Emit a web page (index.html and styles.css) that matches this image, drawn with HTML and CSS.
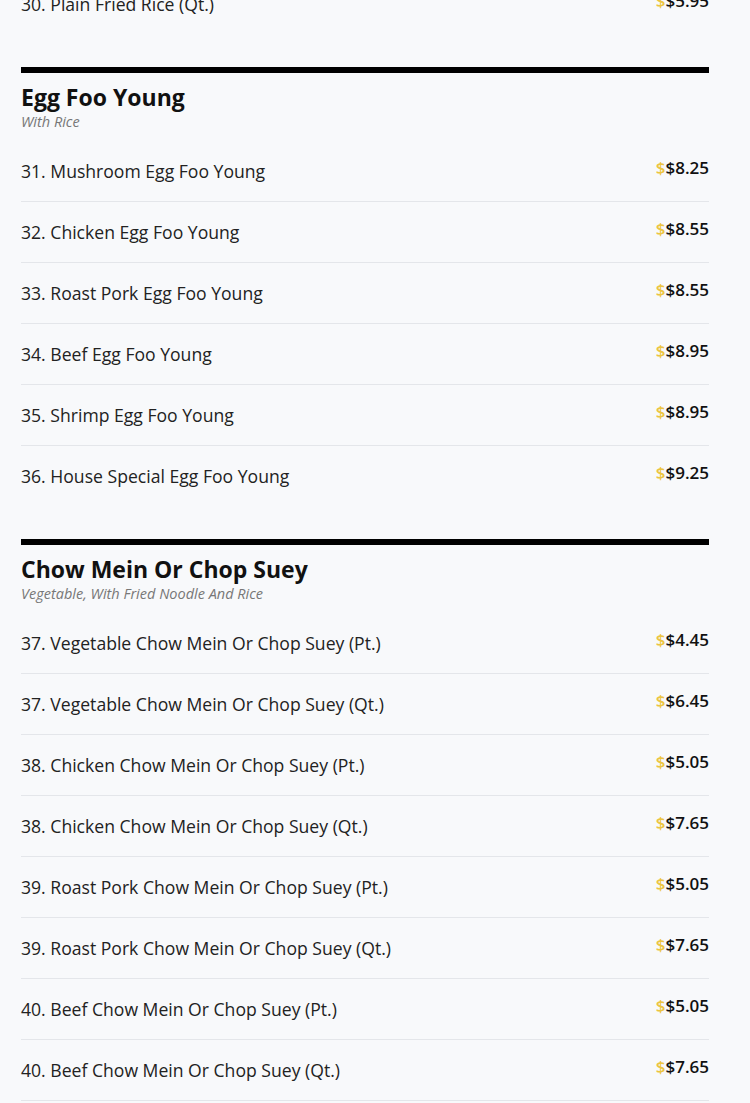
FILE: index.html
```html
<!DOCTYPE html>
<html lang="en">
<head>
<meta charset="utf-8">
<title>Menu</title>
<link rel="stylesheet" href="styles.css">
</head>
<body>
<main class="menu">
  <ul class="items items--cut">
    <li class="item"><span class="item-name">30. Plain Fried Rice (Qt.)</span><span class="price"><span class="cur">$</span>$5.95</span></li>
  </ul>

  <section class="section">
    <h2 class="section-title">Egg Foo Young</h2>
    <p class="section-note">With Rice</p>
    <ul class="items">
      <li class="item"><span class="item-name">31. Mushroom Egg Foo Young</span><span class="price"><span class="cur">$</span>$8.25</span></li>
      <li class="item"><span class="item-name">32. Chicken Egg Foo Young</span><span class="price"><span class="cur">$</span>$8.55</span></li>
      <li class="item"><span class="item-name">33. Roast Pork Egg Foo Young</span><span class="price"><span class="cur">$</span>$8.55</span></li>
      <li class="item"><span class="item-name">34. Beef Egg Foo Young</span><span class="price"><span class="cur">$</span>$8.95</span></li>
      <li class="item"><span class="item-name">35. Shrimp Egg Foo Young</span><span class="price"><span class="cur">$</span>$8.95</span></li>
      <li class="item"><span class="item-name">36. House Special Egg Foo Young</span><span class="price"><span class="cur">$</span>$9.25</span></li>
    </ul>
  </section>

  <section class="section">
    <h2 class="section-title">Chow Mein Or Chop Suey</h2>
    <p class="section-note">Vegetable, With Fried Noodle And Rice</p>
    <ul class="items">
      <li class="item"><span class="item-name">37. Vegetable Chow Mein Or Chop Suey (Pt.)</span><span class="price"><span class="cur">$</span>$4.45</span></li>
      <li class="item"><span class="item-name">37. Vegetable Chow Mein Or Chop Suey (Qt.)</span><span class="price"><span class="cur">$</span>$6.45</span></li>
      <li class="item"><span class="item-name">38. Chicken Chow Mein Or Chop Suey (Pt.)</span><span class="price"><span class="cur">$</span>$5.05</span></li>
      <li class="item"><span class="item-name">38. Chicken Chow Mein Or Chop Suey (Qt.)</span><span class="price"><span class="cur">$</span>$7.65</span></li>
      <li class="item"><span class="item-name">39. Roast Pork Chow Mein Or Chop Suey (Pt.)</span><span class="price"><span class="cur">$</span>$5.05</span></li>
      <li class="item"><span class="item-name">39. Roast Pork Chow Mein Or Chop Suey (Qt.)</span><span class="price"><span class="cur">$</span>$7.65</span></li>
      <li class="item"><span class="item-name">40. Beef Chow Mein Or Chop Suey (Pt.)</span><span class="price"><span class="cur">$</span>$5.05</span></li>
      <li class="item"><span class="item-name">40. Beef Chow Mein Or Chop Suey (Qt.)</span><span class="price"><span class="cur">$</span>$7.65</span></li>
      <li class="item"><span class="item-name">41. Shrimp Chow Mein Or Chop Suey (Pt.)</span><span class="price"><span class="cur">$</span>$5.55</span></li>
    </ul>
  </section>
</main>
</body>
</html>
```
FILE: styles.css
```css
* { box-sizing: border-box; }

html, body {
  margin: 0;
  padding: 0;
  background: #f8f9fb;
  overflow: hidden;
}

body {
  font-family: "Open Sans", "Liberation Sans", sans-serif;
  color: #1f1f1f;
}

.menu {
  width: 688px;
  margin-left: 21px;
}

.items {
  list-style: none;
  margin: 0;
  padding: 0;
}

.items--cut {
  margin-top: -26px;
}

.item {
  display: flex;
  justify-content: space-between;
  align-items: flex-start;
  padding: 17px 0;
  border-bottom: 1px solid #e4e6ea;
}

.item:last-child {
  border-bottom: none;
}

.item-name {
  font-size: 17.6px;
  line-height: 26px;
  color: #222;
}

.price {
  font-size: 17px;
  line-height: 20px;
  font-weight: 600;
  color: #111;
  white-space: nowrap;
}

.cur {
  color: #ecc440;
}

.section {
  margin-top: 33px;
  border-top: 6px solid #000;
}

.section-title {
  margin: 9px 0 0;
  font-size: 23px;
  line-height: 30px;
  font-weight: 700;
  color: #111;
}

.section-note {
  margin: 0 0 9px;
  font-size: 14.5px;
  line-height: 20px;
  font-style: italic;
  color: #777;
}
```
